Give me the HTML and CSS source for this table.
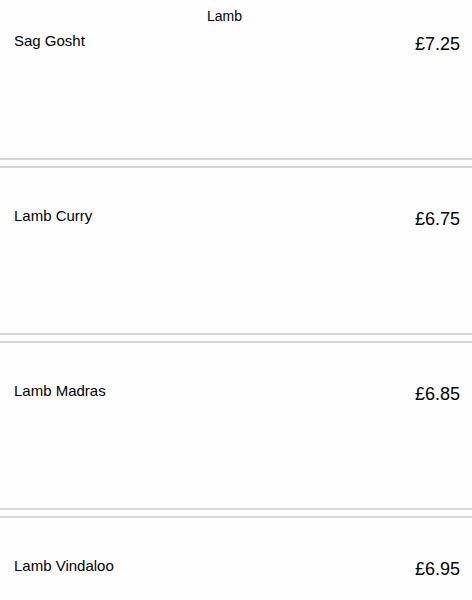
FILE: index.html
```html
<!DOCTYPE html>
<html lang="en">
<head>
<meta charset="utf-8">
<title>Lamb</title>
<link rel="stylesheet" href="styles.css">
</head>
<body>
<div class="menu">
  <h2 class="category">Lamb</h2>
  <div class="list">
    <div class="item item-first">
      <div class="row"><span class="name">Sag Gosht</span><span class="price">£7.25</span></div>
    </div>
    <div class="item">
      <div class="row"><span class="name">Lamb Curry</span><span class="price">£6.75</span></div>
    </div>
    <div class="item">
      <div class="row"><span class="name">Lamb Madras</span><span class="price">£6.85</span></div>
    </div>
    <div class="item">
      <div class="row"><span class="name">Lamb Vindaloo</span><span class="price">£6.95</span></div>
    </div>
  </div>
</div>
</body>
</html>
```

FILE: styles.css
```css
html, body {
  margin: 0;
  padding: 0;
  background: #fefefe;
  color: #000;
  font-family: "Liberation Sans", Arial, sans-serif;
  overflow: hidden;
}

.menu {
  position: relative;
}

.category {
  position: absolute;
  top: 8px;
  left: 0;
  right: 23px;
  margin: 0;
  font-size: 14px;
  font-weight: normal;
  line-height: normal;
  text-align: center;
}

.list {
  display: flex;
  flex-direction: column;
  gap: 6px;
}

.item {
  box-sizing: border-box;
  height: 169px;
  padding: 39px 12px 0 14px;
  border-top: 2px solid #d8d8d8;
  border-bottom: 2px solid #d8d8d8;
}

.item-first {
  border-top: none;
  height: 160px;
  padding-top: 32px;
}

.row {
  display: flex;
  justify-content: space-between;
  align-items: flex-start;
}

.name {
  font-size: 15px;
  line-height: normal;
}

.price {
  font-size: 18px;
  line-height: normal;
  margin-top: 2px;
}
```
